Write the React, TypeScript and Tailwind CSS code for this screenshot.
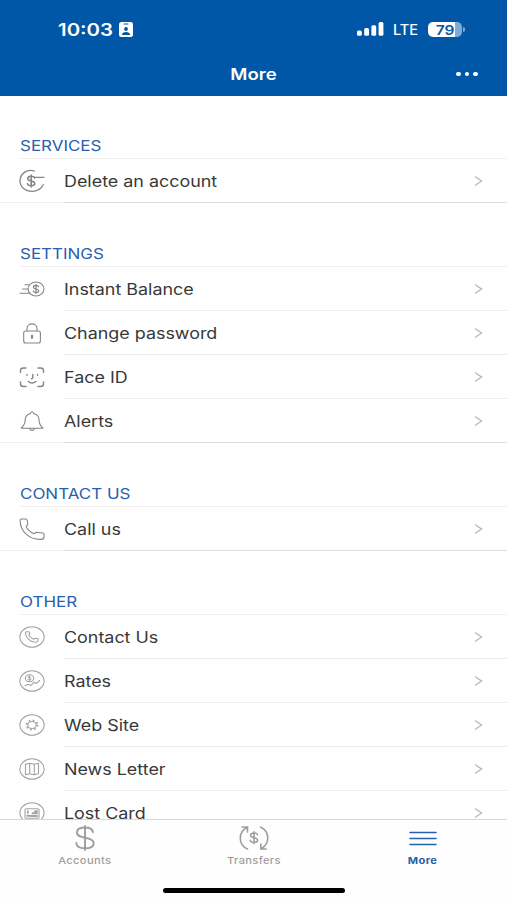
import type { ReactNode } from "react";

const Dollar = ({ x, y, size = 12 }: { x: number; y: number; size?: number }) => (
  <g transform={`translate(${x} ${y}) scale(${size / 12})`}>
    <path d="M3.6-3.2C3.2-4.5 1.9-5 0-5-2.1-5-3.6-4.1-3.6-2.6-3.6-.8-2-.4 0 0 2.2.4 3.8 1 3.8 2.7 3.8 4.2 2.2 5 0 5-2.1 5-3.6 4.2-3.9 2.8M0-6.3V6.3" />
  </g>
);

const Glyph = ({ children, light = false }: { children: ReactNode; light?: boolean }) => (
  <svg
    className={light ? "h-6 w-[26px] shrink-0 text-[#a3a3a3]" : "h-6 w-[26px] shrink-0 text-[#858585]"}
    viewBox="0 0 26 24"
    fill="none"
    stroke="currentColor"
    strokeWidth="1.1"
    strokeLinecap="round"
    strokeLinejoin="round"
  >
    {children}
  </svg>
);

const Ring = () => <ellipse cx="13" cy="12" rx="12.1" ry="10.2" />;

const icons = {
  remove: (
    <Glyph>
      <path d="M15.500 2C8-.2 1 4.500 1 12c0 6 5.500 10.300 12 10.300 5.200 0 9.300-2.500 11.300-6.500M16.500 8.300H25" strokeWidth="1.3" />
      <g strokeWidth="1.6">
        <Dollar x={12.200} y={12} size={11.500} />
      </g>
    </Glyph>
  ),
  instant: (
    <Glyph>
      <ellipse cx="17" cy="12" rx="8" ry="7" />
      <g strokeWidth="1.700">
        <Dollar x={17} y={12} size={8.500} />
      </g>
      <path d="M6 7.800H10M3.500 12H9M1 16.300H11" />
    </Glyph>
  ),
  lock: (
    <Glyph>
      <rect x="4.700" y="10" width="16.700" height="12" rx="2" />
      <path d="M8 10V7.700C8 1.200 18 1.200 18 7.700V10" />
      <path d="M13 14.800V16.800" strokeWidth="2.200" />
    </Glyph>
  ),
  face: (
    <Glyph>
      <path d="M1.500 7.500V5.500Q1.500 3 4.500 3H7M19 3H21.500Q24.500 3 24.500 5.500V7.500M1.500 17V19Q1.500 21.500 4.500 21.500H7M19 21.500H21.500Q24.500 21.500 24.500 19V17" strokeWidth="1.4" />
      <path d="M8 9.500V10.300M18.500 9.500V10.300M13.800 9.500V12.800Q13.800 13.800 12.500 13.800M9.300 16.500Q13 19.500 17 16.500" strokeWidth="1.4" />
    </Glyph>
  ),
  bell: (
    <Glyph>
      <path d="M11.300 4.800Q13 .3 14.800 4.800C18.500 5.500 20 8 20 11 20 15 21 16.500 24 19.200H2.200C5 16.500 6.200 15 6.200 11 6.200 8 7.800 5.500 11.300 4.800ZM10.300 19.500Q13 23.500 15.800 19.500" />
    </Glyph>
  ),
  phone: (
    <Glyph>
      <path d="M1.200 3.500Q1 2 2.500 2H6.500Q8 2 8.200 3.500L8.700 7Q8.700 8 7.500 9C6.500 10.500 11 15 15 16.800L17.500 15.300 23.500 16Q25 16.300 25 17.500V20Q25 22.300 22 22.400C11 22.800 1 15 1.200 3.500Z" />
    </Glyph>
  ),
  contact: (
    <Glyph light>
      <Ring />
      <path d="M6.500 7.700Q6.500 6.700 7.500 6.700H10L10.800 9 9.800 10.300Q11.500 13 14.700 14.200L16 13.200 19 13.700V15.700Q18.800 17.300 16 17.200C11 17 6.500 12.500 6.500 7.700Z" />
    </Glyph>
  ),
  rates: (
    <Glyph light>
      <Ring />
      <ellipse cx="10.500" cy="9.300" rx="4.200" ry="3.500" />
      <g strokeWidth="2.500">
        <Dollar x={10.500} y={9.300} size={4.500} />
      </g>
      <path d="M6 16.700 9 15.200 12 16.400 15 13.200 17.500 14.400 20.500 11.500" />
    </Glyph>
  ),
  gear: (
    <Glyph light>
      <Ring />
      <ellipse cx="13" cy="12" rx="4.200" ry="3.500" />
      <ellipse cx="13" cy="12" rx="5.500" ry="4.600" strokeWidth="1.900" strokeDasharray="1.600 2.400" strokeLinecap="butt" />
    </Glyph>
  ),
  map: (
    <Glyph light>
      <Ring />
      <path d="M6.500 7.200 10.700 6.200 15.300 7.200 19.500 6.200V16.800L15.300 17.800 10.700 16.800 6.500 17.800ZM10.700 6.200V16.800M15.300 7.200V17.800" />
    </Glyph>
  ),
  card: (
    <Glyph light>
      <Ring />
      <rect x="6" y="7.800" width="14" height="9.500" rx="1" />
      <path d="M8.800 10.200V11.700M8.300 14.800H10.500M13.500 12.300H18M16 10.200H18M12 15H18" strokeWidth="1.900" />
    </Glyph>
  ),
};

type Item = { icon: keyof typeof icons; label: string };

const sections: { title: string; items: Item[] }[] = [
  { title: "SERVICES", items: [{ icon: "remove", label: "Delete an account" }] },
  {
    title: "SETTINGS",
    items: [
      { icon: "instant", label: "Instant Balance" },
      { icon: "lock", label: "Change password" },
      { icon: "face", label: "Face ID" },
      { icon: "bell", label: "Alerts" },
    ],
  },
  { title: "CONTACT US", items: [{ icon: "phone", label: "Call us" }] },
  {
    title: "OTHER",
    items: [
      { icon: "contact", label: "Contact Us" },
      { icon: "rates", label: "Rates" },
      { icon: "gear", label: "Web Site" },
      { icon: "map", label: "News Letter" },
      { icon: "card", label: "Lost Card" },
    ],
  },
];

function Row({ item, last }: { item: Item; last: boolean }) {
  return (
    <li className={last ? "flex h-11 border-b border-[#efefef] pl-[19px]" : "flex h-11 pl-[19px]"}>
      <div className="flex w-[44.5px] shrink-0 items-center">{icons[item.icon]}</div>
      <div
        className={
          last
            ? "-mb-px flex grow items-center border-b border-[#dedede] pr-6"
            : "flex grow items-center border-b border-[#ececec] pr-6"
        }
      >
        <span className="origin-left scale-x-[1.155] pt-0.5 text-[15.5px] whitespace-nowrap text-[#383838]">
          {item.label}
        </span>
        <svg className="ml-auto h-3 w-[9px]" viewBox="0 0 9 12" fill="none" stroke="#bcbcbc" strokeWidth="1.5">
          <path d="M1 1.500 7.500 6 1 10.500" />
        </svg>
      </div>
    </li>
  );
}

function StatusBar() {
  return (
    <div className="flex h-[58px] items-center pl-[58px] pr-[42px]">
      <span className="w-[56px] origin-left scale-x-[1.2] pt-[3px] text-[17px] font-semibold">10:03</span>
      <svg className="ml-[5px] h-[15px] w-[14px]" viewBox="0 0 14 15">
        <rect width="14" height="15" rx="2.500" fill="#fff" />
        <rect x="4.500" y="1.500" width="5" height="1" rx=".5" fill="#0057a8" />
        <ellipse cx="7" cy="7" rx="1.900" ry="2" fill="#0057a8" />
        <path d="M2.800 13C2.800 9 11.200 9 11.200 13Z" fill="#0057a8" />
      </svg>
      <svg className="ml-auto h-[14px] w-[27px]" viewBox="0 0 27 14" fill="#fff">
        <rect x="0" y="8.500" width="4.800" height="5.300" rx="1.500" />
        <rect x="7.200" y="6" width="4.800" height="7.800" rx="1.500" />
        <rect x="14.400" y="3.200" width="4.800" height="10.600" rx="1.500" />
        <rect x="21.600" y="0" width="4.800" height="13.800" rx="1.500" />
      </svg>
      <span className="ml-[9px] w-[35px] origin-left scale-x-[1.04] pt-px text-[14px] font-medium">LTE</span>
      <div className="flex h-[15px] w-[34px] items-center justify-center rounded-[5px] bg-linear-to-r from-white from-79% to-[#80abd5] to-79% text-[#0057a8]">
        <span className="scale-x-[1.15] pt-[2px] text-[13.5px] leading-[13px] font-semibold">79</span>
      </div>
      <div className="ml-px h-[5px] w-[2px] rounded-r-full bg-[#80abd5]" />
    </div>
  );
}

function Tab({ label, active = false, children }: { label: string; active?: boolean; children: ReactNode }) {
  return (
    <div className={active ? "flex flex-1 flex-col items-center text-[#2860ae]" : "flex flex-1 flex-col items-center text-[#9e9e9e]"}>
      <svg className="mt-1 h-[28px] w-[30px]" viewBox="0 0 30 28" fill="none" stroke="currentColor" strokeWidth="1.900" strokeLinecap="round">
        {children}
      </svg>
      <span
        className={
          active
            ? "mt-[2px] scale-x-[1.17] text-[9.5px] leading-[14px] font-bold tracking-[0.3px]"
            : "mt-[2px] scale-x-[1.17] text-[9.5px] leading-[14px] font-medium tracking-[0.3px]"
        }
      >
        {label}
      </span>
    </div>
  );
}

export default function App() {
  return (
    <div className="flex h-[900px] w-[507px] flex-col overflow-hidden bg-white font-[Inter,'Liberation_Sans',sans-serif]">
      <header className="h-24 shrink-0 bg-[#0057a8] text-white">
        <StatusBar />
        <div className="grid h-8 grid-cols-3 items-center">
          <h1 className="col-start-2 scale-x-[1.16] text-center text-[16px] font-semibold">More</h1>
          <div className="flex items-center justify-end gap-[4px] pr-[29px]">
            <i className="h-1 w-[5px] rounded-full bg-white" />
            <i className="h-1 w-[4px] rounded-full bg-white" />
            <i className="h-1 w-[5px] rounded-full bg-white" />
          </div>
        </div>
      </header>
      <main className="min-h-0 grow overflow-hidden">
        {sections.map((section, index) => (
          <section key={section.title}>
            <div className={index === 0 ? "flex h-[63px] flex-col justify-end" : "flex h-16 flex-col justify-end"}>
              <h2 className="ml-5 h-6 origin-left scale-x-[1.17] text-[14.5px] leading-6 text-[#2860ae]">
                {section.title}
              </h2>
              <div className="ml-5 h-px bg-[#eeeeee]" />
            </div>
            <ul>
              {section.items.map((item, i) => (
                <Row key={item.label} item={item} last={i === section.items.length - 1} />
              ))}
            </ul>
          </section>
        ))}
      </main>
      <footer className="flex h-[81px] shrink-0 flex-col justify-between border-t border-[#d8d8d8] bg-[#fefefe]">
        <nav className="flex">
          <Tab label="Accounts">
            <path d="M23 8.200C22.500 5 19.500 3.500 15 3.500S7 5.200 7 8.500C7 12.200 11 13 15 13.700S23.700 15.500 23.700 19.200C23.700 22.500 20 24.300 15 24.300S6.500 22.500 6.300 19M15 2V26" />
          </Tab>
          <Tab label="Transfers">
            <g strokeWidth="1.600">
              <path d="M8.500 25C-1 21-1 8 8 3.500M3 3H8.500V8M21.500 3C31 7.500 31 19.500 22.500 24.500M27.300 25H21.800V20" />
              <Dollar x={15} y={13.700} size={11.500} />
            </g>
          </Tab>
          <Tab label="More" active>
            <path d="M2 8.500H28M2 14.500H28M2 20.500H28" strokeWidth="1.500" />
          </Tab>
        </nav>
        <div className="mb-[7px] h-[5px] w-[182px] self-center rounded-full bg-black" />
      </footer>
    </div>
  );
}
